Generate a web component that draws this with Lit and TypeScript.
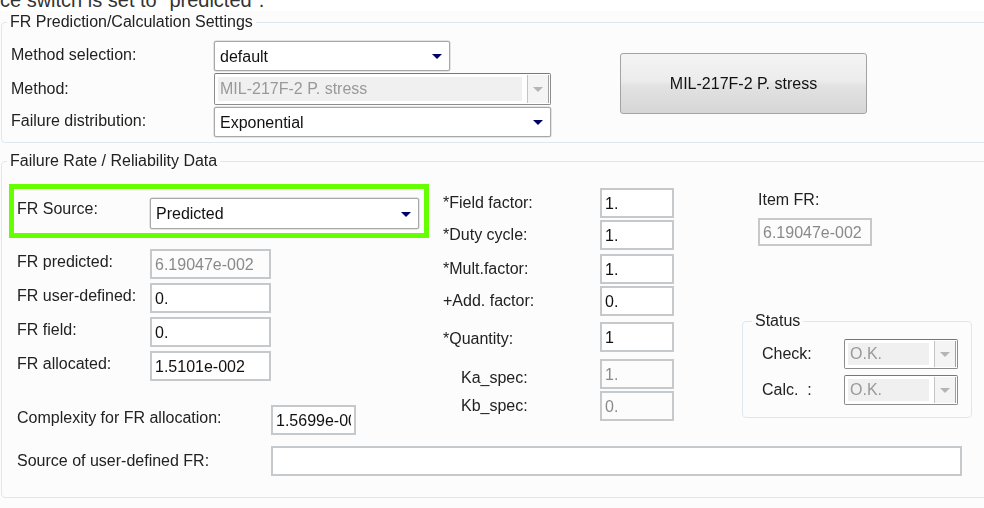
import { LitElement, html, css } from "lit";
import { customElement } from "lit/decorators.js";

@customElement("app-root")
export class AppRoot extends LitElement {
  static styles = css`
    :host { display: block; width: 984px; height: 508px; overflow: hidden; background: #fcfcfc;
      font: 16px/18px "Liberation Sans", Arial, sans-serif; color: #222; }
    .wrap { width: 984px; height: 508px; filter: blur(0.5px); }
    .banner { height: 11px; background: #fff; overflow: hidden; font-size: 20px; line-height: 11px; white-space: pre; color: #333; }
    .banner span { display: block; margin-top: -5px; }
    fieldset { margin: 0; min-width: 0; border: 1px solid #dfe7ee; border-radius: 4px; box-sizing: border-box; }
    legend { padding: 0 3px; line-height: 18px; color: #222; }
    .outer { width: 1010px; margin-left: 1px; }
    .f1 { margin-top: 2px; padding: 10px 0 5px 9px; }
    .f1 legend { margin-left: -4px; }
    .f2 { margin-top: 9px; padding: 14px 0 21px 7px; }
    .f2 legend { margin-left: -2px; }
    .row { display: flex; align-items: center; }
    .label { flex: none; white-space: nowrap; }
    .stack { display: flex; flex-direction: column; }
    .settings { display: flex; align-items: flex-start; }
    .settings .stack { gap: 2px; }
    .settings .label { width: 203px; }
    .settings .lift { padding-bottom: 3px; }
    .settings .w1 { width: 236px; height: 30px; }
    .settings .w2 { width: 337px; height: 32px; }
    .settings .w3 { width: 337px; height: 30px; }
    .calc { width: 247px; height: 61px; margin: 12px 0 0 69px; box-sizing: border-box; border: 1px solid #a3a3a3; border-radius: 3px;
      background: linear-gradient(#f4f4f4, #ececec 45%, #e2e2e2 55%, #d6d6d6); display: flex; align-items: center; justify-content: center; color: #111; }
    .select { box-sizing: border-box; background: #fff; border: 1px solid #a8a8a8; border-radius: 2px; box-shadow: 0 0 0 0.5px #ccc;
      display: flex; align-items: center; justify-content: space-between; padding: 1px 7px 0 5px; color: #111; }
    .arrow { width: 0; height: 0; border-left: 5px solid transparent; border-right: 5px solid transparent; border-top: 5px solid #000066; }
    .combo { box-sizing: border-box; border: 1px solid #8c8c8c; border-top-color: #777; border-radius: 2px; background: #fff;
      display: flex; align-items: stretch; padding: 3px 1px 3px 3px; color: #999; }
    .combo .val { flex: 1; background: #f0f0f0; display: flex; align-items: center; padding-left: 2px; }
    .combo .btn { width: 20px; margin: -2px 0 -2px 5px; background: #f4f4f4; border-left: 1px solid #c4c4c4; border-right: 1px solid #a0a0a0; display: flex; align-items: center; justify-content: center; }
    .combo .tri { width: 0; height: 0; border-left: 5px solid transparent; border-right: 5px solid transparent; border-top: 5px solid #b5b5b5; }
    .input { box-sizing: border-box; flex: none; height: 30px; background: #fff; border: 2px solid #c6c9cc; padding: 2px 2px 0 3px; display: flex; align-items: center; color: #111; overflow: hidden; white-space: nowrap; }
    .input.off { background: #fcfcfc; color: #8a8a8a; }
    .clip { display: block; width: 75px; overflow: hidden; }
    .data { display: flex; align-items: flex-start; }
    .left { width: 420px; }
    .green { box-sizing: border-box; height: 54px; border: 5px solid #66ff00; padding: 0 5px 0 3px; display: flex; align-items: center; }
    .green .label { width: 133px; padding-bottom: 4px; }
    .green .select { width: 269px; height: 31px; margin-top: 5px; }
    .rates { margin: 11px 0 0 8px; gap: 4px; }
    .rates .label { width: 133px; padding-bottom: 4px; }
    .rates .input { width: 121px; }
    .cplx { margin: 24px 0 0 8px; }
    .cplx .label { width: 254px; padding-bottom: 4px; }
    .cplx .input { width: 85px; }
    .mid { width: 231px; margin: 4px 0 0 14px; }
    .mid .group { display: flex; flex-direction: column; gap: 2px; }
    .mid .label { width: 157px; }
    .mid .input { width: 74px; }
    .mid .indent { padding-left: 18px; width: 139px; }
    .mid .drop2 { padding-top: 4px; }
    .mid .drop4 { padding-top: 8px; }
    .g2 { margin-top: 4px; } .g3 { margin-top: 6px; } .g4 { margin-top: 7px; }
    .right { width: 230px; margin-left: 68px; margin-top: 7px; }
    .item { padding-left: 16px; }
    .item .input { width: 114px; height: 28px; margin-top: 9px; }
    .status { margin-top: 66px; width: 230px; padding: 9px 0 12px 19px; }
    .status legend { margin-left: -10px; }
    .status .stack { gap: 6px; }
    .status .label { width: 82px; }
    .status .combo { width: 114px; height: 30px; }
    .source { margin: 11px 0 0 8px; }
    .source .label { width: 254px; }
    .source .input { width: 691px; }
  `;

  private combo(text: string, cls = "") {
    return html`<div class="combo ${cls}"><div class="val">${text}</div><div class="btn"><div class="tri"></div></div></div>`;
  }
  private sel(text: string, cls = "") {
    return html`<div class="select ${cls}"><span>${text}</span><div class="arrow"></div></div>`;
  }
  private field(label: string, value: string, off = false, labelCls = "") {
    return html`<div class="row"><div class="label ${labelCls}">${label}</div><div class="input ${off ? "off" : ""}">${value}</div></div>`;
  }

  render() {
    return html`<div class="wrap">
      <div class="banner"><span>ce switch is set to "predicted".</span></div>
      <div class="outer">
        <fieldset class="f1">
          <legend>FR Prediction/Calculation Settings</legend>
          <div class="settings">
            <div class="stack">
              <div class="row"><div class="label lift">Method selection:</div>${this.sel("default", "w1")}</div>
              <div class="row"><div class="label">Method:</div>${this.combo("MIL-217F-2 P. stress", "w2")}</div>
              <div class="row"><div class="label lift">Failure distribution:</div>${this.sel("Exponential", "w3")}</div>
            </div>
            <div class="calc">MIL-217F-2 P. stress</div>
          </div>
        </fieldset>
        <fieldset class="f2">
          <legend>Failure Rate / Reliability Data</legend>
          <div class="data">
            <div class="left">
              <div class="green"><div class="label">FR Source:</div>${this.sel("Predicted")}</div>
              <div class="stack rates">
                ${this.field("FR predicted:", "6.19047e-002", true)}
                ${this.field("FR user-defined:", "0.")}
                ${this.field("FR field:", "0.")}
                ${this.field("FR allocated:", "1.5101e-002")}
              </div>
              <div class="row cplx"><div class="label">Complexity for FR allocation:</div><div class="input"><span class="clip">1.5699e-001</span></div></div>
            </div>
            <div class="mid">
              <div class="group">${this.field("*Field factor:", "1.")}${this.field("*Duty cycle:", "1.")}</div>
              <div class="group g2">${this.field("*Mult.factor:", "1.")}${this.field("+Add. factor:", "0.")}</div>
              <div class="group g3">${this.field("*Quantity:", "1", false, "drop2")}</div>
              <div class="group g4">${this.field("Ka_spec:", "1.", true, "indent drop4")}${this.field("Kb_spec:", "0.", true, "indent")}</div>
            </div>
            <div class="right">
              <div class="item"><div>Item FR:</div><div class="input off">6.19047e-002</div></div>
              <fieldset class="status">
                <legend>Status</legend>
                <div class="stack">
                  <div class="row"><div class="label">Check:</div>${this.combo("O.K.")}</div>
                  <div class="row"><div class="label">Calc. &nbsp;:</div>${this.combo("O.K.")}</div>
                </div>
              </fieldset>
            </div>
          </div>
          <div class="row source"><div class="label">Source of user-defined FR:</div><div class="input"></div></div>
        </fieldset>
      </div>
    </div>`;
  }
}
